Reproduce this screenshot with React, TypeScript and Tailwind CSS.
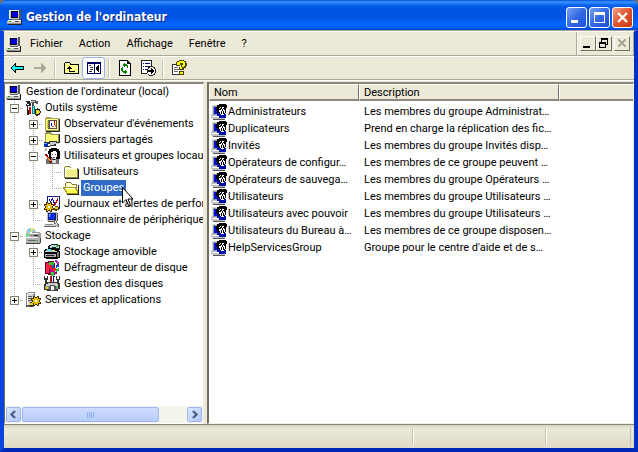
import type { ReactNode } from "react";

type IconProps = { size?: string; children: ReactNode };

function Icon({ children, size = "size-4" }: IconProps) {
  return (
    <svg viewBox="0 0 16 16" className={`${size} block shrink-0`} shapeRendering="crispEdges" aria-hidden="true">
      {children}
    </svg>
  );
}

const ComputerIcon = () => (
  <Icon>
    <path d="M2 1h10v9H2z" fill="#c4c4c4" />
    <path d="M2 1h10v1H2zM2 2h1v8H2z" fill="#f0f0f0" />
    <path d="M12 1h2v9h-2z" fill="#555" />
    <path d="M4 2h7v7H4z" fill="#000" />
    <path d="M5 3h6v5H5z" fill="#0000d8" />
    <path d="M4 10h8v1H4z" fill="#666" />
    <path d="M1 11h13v3H0v-2h1z" fill="#d0d0c8" />
    <path d="M1 11h12v1H1z" fill="#fff" />
    <path d="M0 14h14v1H0z" fill="#909090" />
    <path d="M1 15h14v1H1zM14 10h1v5h-1z" fill="#222" />
    <path d="M8 12h4v1H8z" fill="#555" />
    <path d="M2 12h2v1H2z" fill="#00a000" />
  </Icon>
);

const ToolsIcon = () => (
  <Icon>
    <path d="M1 1h4v2h1v3H4v9H2V6H1z" fill="#222" />
    <path d="M1 2h1v2H1zM2 4h2v1H2zM3 6h1v4H3z" fill="#fff" />
    <path d="M6 0h5v1h2v3h-2V3H9v4H7V3H6z" fill="#555" />
    <path d="M6 1h4v1H6z" fill="#ddd" />
    <path d="M4 7h2v7H4z" fill="#d00000" />
    <path d="M7 6h3v8H7z" fill="#008080" />
    <path d="M8 6h1v7H8z" fill="#60e0d0" />
    <path d="M10 9h2V8h1v1h2v2h1v2h-1v2h-2v1h-2v-1h-1z" fill="#222" />
    <path d="M11 10h3v1h1v2h-1v1h-3z" fill="#e8c800" />
    <path d="M12 11h1v2h-1z" fill="#fff" />
  </Icon>
);

const EventIcon = () => (
  <Icon>
    <path d="M1 2h1V1h5v1h8v13H1z" fill="#a8a060" />
    <path d="M2 3h12v11H2z" fill="#ffff80" />
    <path d="M15 3h1v13H2v-1h13z" fill="#222" />
    <path d="M4 4h9v9H4z" fill="#555" />
    <path d="M6 5h6v7H6z" fill="#fff" />
    <path d="M7 7h1v3H7z" fill="#0000ff" />
    <path d="M10 5h1v4h-1z" fill="#e00000" />
    <path d="M8 10h2v1H8zM11 9h1v2h-1z" fill="#e07050" />
    <path d="M3 5h2v1H3zM3 7h2v1H3zM3 9h2v1H3zM3 11h2v1H3z" fill="#c0a000" />
  </Icon>
);

const FolderIcon = () => (
  <Icon>
    <path d="M1 3h1V2h5v1h1v1h7v10H1z" fill="#808060" />
    <path d="M2 3h5v1H2zM2 5h12v8H2z" fill="#ffff90" />
    <path d="M2 4h12v1H2zM2 5h1v8H2z" fill="#fff" />
    <path d="M4 6h1v1H4zM6 6h1v1H6zM8 6h1v1H8zM10 6h1v1h-1zM12 6h1v1h-1zM5 7h1v1H5zM7 7h1v1H7zM9 7h1v1H9zM11 7h1v1h-1zM4 8h1v1H4zM6 8h1v1H6zM8 8h1v1H8zM10 8h1v1h-1zM12 8h1v1h-1zM5 9h1v1H5zM7 9h1v1H7zM9 9h1v1H9zM11 9h1v1h-1zM4 10h1v1H4zM6 10h1v1H6zM8 10h1v1H8zM10 10h1v1h-1zM12 10h1v1h-1zM5 11h1v1H5zM7 11h1v1H7zM9 11h1v1H9zM11 11h1v1h-1z" fill="#e8d880" />
    <path d="M15 5h1v10H2v-1h13z" fill="#222" />
  </Icon>
);

const OpenFolderIcon = () => (
  <Icon>
    <path d="M2 3h1V2h5v1h1v1h5v4H2z" fill="#808040" />
    <path d="M3 3h5v1h1v1h4v3H3z" fill="#ffffc0" />
    <path d="M0 7h13v1h1v2h1v4H3v-2H2v-2H1V9H0z" fill="#a89820" />
    <path d="M2 8h10v1h1v2h1v2H4v-2H3V9H2z" fill="#ffff50" />
    <path d="M2 8h10v1H2z" fill="#fff" />
    <path d="M15 5h1v10H4v-1h11z" fill="#222" />
  </Icon>
);

const SharedIcon = () => (
  <Icon>
    <path d="M1 1h1V0h5v1h1v1h7v10H1z" fill="#909050" />
    <path d="M2 2h5v1h7v7H2z" fill="#ffff78" />
    <path d="M15 2h1v9h-1z" fill="#222" />
    <path d="M0 10h5V9h8v1h2v2h-3v2H6v1H0z" fill="#333" />
    <path d="M6 10h6v1h3v1h-5v1H6z" fill="#c8c8c8" />
    <path d="M0 11h4v4H0z" fill="#0030b0" />
    <path d="M0 11h3v1H0z" fill="#60a0ff" />
    <path d="M4 12h2v2H4z" fill="#fff" />
  </Icon>
);

const LocalUsersIcon = () => (
  <Icon>
    <path d="M5 1h2V0h6v1h2v2h1v8h-2v2H8v-2H4V9h1V6H4V3h1z" fill="#000" />
    <path d="M7 4h2V3h3v1h1v5h-1v2H8V9H7z" fill="#fff" />
    <path d="M8 6h1v1H8zM11 6h1v1h-1zM9 9h2v1H9z" fill="#903030" />
    <path d="M2 11h5v-1h2v2h2v-1h4v5H2z" fill="#707070" />
    <path d="M8 12h4v3H8z" fill="#ddd" />
    <path d="M1 6h2v1h1v2h1v1h1v1h1v2h1v2H6v-1H5v-2H4v-1H3V9H2V8H1z" fill="#800000" />
    <path d="M1 7h1v1h1v1h1v2h1v1h1v1H5v-1H4v-1H3V9H2V8H1z" fill="#ff4020" />
    <path d="M4 10h1v1h1v1h1v1H6v-1H5v-1H4z" fill="#ffe000" />
    <path d="M1 0h2v2H1zM0 2h3v1H0z" fill="#bbb" />
  </Icon>
);

const UserGroupIcon = () => (
  <Icon>
    <path d="M1 1h7v10H1z" fill="#999" />
    <path d="M1 1h5v1H2v8H1z" fill="#d8d8d8" />
    <path d="M3 3h6v7H3z" fill="#0010d8" />
    <path d="M0 11h8v1h6v3H1v-1H0z" fill="#c0c0c0" />
    <path d="M1 12h10v1H1z" fill="#fff" />
    <path d="M2 15h12v1H2z" fill="#555" />
    <path d="M5 3h1V1h2V0h7v1h1v3h-1v5h-1v2H9v-1H7V9H6V7H5z" fill="#000" />
    <path d="M8 4h1v1H8zM9 3h1v1H9zM11 3h2v1h-1v1h-1zM8 6h2V5h1v2h-1v3H9V8H8zM12 5h1v1h1v3h-1V7h-1zM11 7h1v3h-1z" fill="#fff" />
    <path d="M6 9h2v1h2v1h3v-1h2v4H8v-2H6z" fill="#0010a8" />
    <path d="M10 10h3v1h-3z" fill="#fff" />
  </Icon>
);

const PerfIcon = () => (
  <Icon>
    <path d="M3 0h12v14H3z" fill="#fff" />
    <path d="M3 0h13v1H3zM15 1h1v12h-1zM3 1h1v5H3z" fill="#102080" />
    <path d="M5 3h1v2H5zM6 5h1v1H6zM7 3h1v2H7zM8 2h1v2H8zM9 4h1v3H9zM10 6h1v2h-1z" fill="#0000e0" />
    <path d="M13 2h1v3h-1zM12 4h1v3h-1zM11 6h1v3h-1zM10 8h1v2h-1z" fill="#e00000" />
    <path d="M2 6h2v1h2V6h2v2h2v2H9v2h1v2H8v2H6v-1H4v1H2v-2H0v-2h1v-2H0V8h2z" fill="#403000" />
    <path d="M3 7h1v1h2V7h1v2h2v1H8v2h1v1H7v2H6v-1H4v1H3v-2H1v-1h1v-2H1V9h2z" fill="#e8c000" />
    <path d="M4 10h2v2H4z" fill="#fff" />
    <path d="M11 10h3v1h1v3h-2v1h-2v-1h-1v-2h1z" fill="#504000" />
    <path d="M11 11h3v2h-3z" fill="#f0d000" />
  </Icon>
);

const DeviceIcon = () => (
  <Icon>
    <path d="M3 0h10v9H3z" fill="#b8b8b8" />
    <path d="M4 1h8v7H4z" fill="#102080" />
    <path d="M5 2h6v5H5z" fill="#0030e8" />
    <path d="M5 2h2v1H5zM5 3h1v2H5z" fill="#70b0ff" />
    <path d="M13 1h1v8h-1zM4 9h9v1H4z" fill="#555" />
    <path d="M1 11h11v3H0v-2h1z" fill="#d0d0d0" />
    <path d="M1 11h11v1H1z" fill="#fff" />
    <path d="M0 14h12v1H0z" fill="#666" />
    <path d="M2 12h7v1H2z" fill="#888" />
    <path d="M10 8h2v1h1v2h1v1h1v3h-2v-1h-1v-2h-2z" fill="#666" />
    <path d="M11 9h1v2h1v2h1v1h-1v-1h-1v-2h-1z" fill="#fff" />
  </Icon>
);

const StorageIcon = () => (
  <Icon>
    <circle cx="6" cy="5" r="5" fill="#b0c8c8" />
    <path d="M6 5L2 1h3z" fill="#40e0f0" />
    <path d="M6 5V0h3z" fill="#f0f060" />
    <path d="M6 5L1 6v3z" fill="#60e060" />
    <path d="M5 4h2v2H5z" fill="#fff" />
    <path d="M7 4h8v1h1v6H5V6h2z" fill="#999" />
    <path d="M7 5h7v1H7z" fill="#eee" />
    <path d="M9 7h4v1H9z" fill="#222" />
    <path d="M1 9h12v1h2v5H1z" fill="#b0b0b0" />
    <path d="M1 9h12v1H1z" fill="#fff" />
    <path d="M1 15h14v1H1zM15 10h1v5h-1z" fill="#444" />
    <path d="M3 12h8v1H3z" fill="#666" />
    <path d="M12 12h1v1h-1z" fill="#00c000" />
  </Icon>
);

const RemovableIcon = () => (
  <Icon>
    <path d="M5 1h2V0h7v1h2v5H4V2h1z" fill="#222" />
    <path d="M7 1h6v1h2v2h-3V3H8v1H6V2h1z" fill="#b8d8e0" />
    <path d="M12 1h2v2h-2z" fill="#30d030" />
    <path d="M0 6h1V5h3V4h8v1h3v2h1v7h-2v1H2v-1H0z" fill="#000" />
    <path d="M2 6h9v1h2v1H1V7h1z" fill="#c8c8c8" />
    <path d="M3 5h4v2H3z" fill="#50e0f0" />
    <path d="M8 6h3v1H8z" fill="#f0f060" />
    <path d="M1 10h11v3H1z" fill="#a8a8a8" />
    <path d="M2 11h8v1H2z" fill="#222" />
    <path d="M13 8h2v5h-2z" fill="#777" />
  </Icon>
);

const DefragIcon = () => (
  <Icon>
    <path d="M1 2h3V1h6v2h1v12H4v-1H1z" fill="#700020" />
    <path d="M2 3h3v10H2z" fill="#ff2050" />
    <path d="M5 2h5v3H5z" fill="#30c030" />
    <path d="M5 5h3v4H5z" fill="#f01818" />
    <path d="M6 9h5v5H6z" fill="#c80090" />
    <path d="M8 5h2v3H8z" fill="#1050e0" />
    <path d="M9 8h3v3H9z" fill="#ff3010" />
    <path d="M11 0h2v1h1v1h1v2h-2V3h-1V2h-1z" fill="#c020c0" />
    <path d="M12 5h1V4h2v3h-2v1h-1z" fill="#2040d0" />
    <path d="M12 9h2V8h1v3h-2v1h-1z" fill="#20b040" />
    <path d="M7 12h3v4H7z" fill="#30d040" />
    <path d="M11 12h2v2h-2z" fill="#801060" />
  </Icon>
);

const DisksIcon = () => (
  <Icon>
    <path d="M0 0h1v2h2V0h1v4H3v4H1V4H0zM12 0h1v3h2V0h1v4h-1v4h-2V4h-1z" fill="#333" />
    <path d="M6 0h2v7H6z" fill="#c01010" />
    <path d="M9 0h2v1h-1v6H9z" fill="#101080" />
    <path d="M1 7h2V6h11v1h2v6h-2v2H3v-1H0V8h1z" fill="#333" />
    <path d="M2 8h2V7h9v1h1v2H2z" fill="#ccc" />
    <path d="M1 10h13v3H1z" fill="#999" />
    <path d="M6 9h5v1h1v4h-1v1H6v-1H5v-4h1z" fill="#555" />
    <path d="M7 10h3v4H7z" fill="#eee" />
    <path d="M12 11h1v1h-1z" fill="#00e000" />
    <path d="M2 11h2v2H2z" fill="#e8d800" />
  </Icon>
);

const ServicesIcon = () => (
  <Icon>
    <path d="M1 1h2V0h7v13H1z" fill="#888" />
    <path d="M2 2h6v11H2z" fill="#d4d4d4" />
    <path d="M2 2h1v11H2zM3 1h6v1H3z" fill="#fff" />
    <path d="M3 4h4v1H3zM3 6h4v1H3zM3 8h4v1H3z" fill="#555" />
    <path d="M1 13h8v2H1z" fill="#555" />
    <path d="M8 4h2v1h2V4h2v2h2v2h-1v2h1v2h-2v2h-2v-1h-2v1H8v-2H6v-2h1V8H6V6h2z" fill="#403000" />
    <path d="M9 5h1v1h2V5h1v2h2v1h-1v2h1v1h-2v2h-1v-1h-2v1H9v-2H7v-1h1V8H7V7h2z" fill="#e8c000" />
    <path d="M10 8h2v2h-2z" fill="#fff" />
    <path d="M5 10h2v1h2v3H7v1H5z" fill="#333" />
    <path d="M5 11h3v2H5z" fill="#f0d000" />
  </Icon>
);

const BackIcon = () => (
  <Icon>
    <path d="M6 3h1v3h8v4H7v3H6v-1H5v-1H4v-1H3V9H2V7h1V6h1V5h1V4h1z" fill="#000" />
    <path d="M6 5v2h8v2H6v2H5v-1H4V9H3V7h1V6h1V5z" fill="#00ffff" />
  </Icon>
);

const ForwardIcon = () => (
  <Icon>
    <path d="M9 3h1v1h1v1h1v1h1v1h1v2h-1v1h-1v1h-1v1h-1v1H9v-4H2V7h7z" fill="#aca899" />
  </Icon>
);

const UpIcon = () => (
  <Icon>
    <path d="M1 3h1V2h5v1h1v1h8v10H1z" fill="#000" />
    <path d="M2 3h5v2h8v8H2z" fill="#ffff90" />
    <path d="M6 6h1v1h1v1h1v1H7v2h5v1H6V9H4V8h1V7h1z" fill="#000" />
  </Icon>
);

const PaneIcon = () => (
  <Icon>
    <path d="M1 2h14v12H1z" fill="#000060" />
    <path d="M2 4h6v9H2zM9 4h5v9H9z" fill="#fff" />
    <path d="M3 5h2v1H3zM4 7h3v1H4zM4 9h3v1H4zM3 11h3v1H3z" fill="#333" />
    <path d="M12 5h1v7h-1v-1h-1v-1h-1V7h1V6h1z" fill="#000" />
  </Icon>
);

const RefreshIcon = () => (
  <Icon>
    <path d="M2 0h9v1h1v1h1v1h1v13H2z" fill="#000" />
    <path d="M3 1h7v3h3v11H3z" fill="#fff" />
    <path d="M7 3h1v1h2v1h1v3h-1V6H8v1H7V6H6V4h1zM5 7h1v4h2v-1h1v1h1v2H9v1H8v-1H6v-1H5v-1H4V8h1z" fill="#008000" />
  </Icon>
);

const ExportIcon = () => (
  <Icon>
    <path d="M1 0h11v6h-1V1H2v12h5v1H1z" fill="#222" />
    <path d="M2 1h9v5H8v7H2z" fill="#fff" />
    <path d="M3 3h1v1H3zM5 3h5v1H5zM3 6h1v1H3zM5 6h4v1H5zM3 9h1v1H3zM5 9h2v1H5z" fill="#000080" />
    <path d="M9 6h4v1h2v2h1v4h-1v2h-2v1H9v-1H8v-2H7V9h1V7h1z" fill="#222" />
    <path d="M9 8h1V7h3v1h1v1h1v4h-1v1h-1v1H9v-1H8V9h1z" fill="#fff" />
    <path d="M11 8h1v1h1v1h1v2h-1v1h-1v1h-1v-2H8v-2h3z" fill="#000" />
  </Icon>
);

const HelpIcon = () => (
  <Icon>
    <path d="M1 4h7v11H1z" fill="#333" />
    <path d="M2 5h8v9H2z" fill="#fff" />
    <path d="M3 7h4v1H3zM3 9h5v1H3zM3 11h4v1H3z" fill="#666" />
    <path d="M2 14h9v1H2z" fill="#333" />
    <path d="M5 2h1V1h2V0h5v1h2v2h1v3h-1v2h-2v2H8V7h2V5H9v1H5z" fill="#444400" />
    <path d="M6 2h2V1h5v1h1v4h-1v1h-2v2H9V7h2V5h1V3H9v2H6z" fill="#ffff00" />
    <path d="M8 11h5v4H8z" fill="#444400" />
    <path d="M9 12h3v2H9z" fill="#ffff00" />
  </Icon>
);

type Guide = "line" | "tee" | "end";

type TreeNode = {
  label: string;
  icon: ReactNode;
  guides: Guide[];
  expander?: "plus" | "minus";
  selected?: boolean;
};

const tree: TreeNode[] = [
  { label: "Gestion de l'ordinateur (local)", icon: <ComputerIcon />, guides: [] },
  { label: "Outils système", icon: <ToolsIcon />, guides: ["tee"], expander: "minus" },
  { label: "Observateur d'événements", icon: <EventIcon />, guides: ["line", "tee"], expander: "plus" },
  { label: "Dossiers partagés", icon: <SharedIcon />, guides: ["line", "tee"], expander: "plus" },
  { label: "Utilisateurs et groupes locaux", icon: <LocalUsersIcon />, guides: ["line", "tee"], expander: "minus" },
  { label: "Utilisateurs", icon: <FolderIcon />, guides: ["line", "line", "tee"] },
  { label: "Groupes", icon: <OpenFolderIcon />, guides: ["line", "line", "end"], selected: true },
  { label: "Journaux et alertes de performance", icon: <PerfIcon />, guides: ["line", "tee"], expander: "plus" },
  { label: "Gestionnaire de périphériques", icon: <DeviceIcon />, guides: ["line", "end"] },
  { label: "Stockage", icon: <StorageIcon />, guides: ["tee"], expander: "minus" },
  { label: "Stockage amovible", icon: <RemovableIcon />, guides: ["line", "tee"], expander: "plus" },
  { label: "Défragmenteur de disque", icon: <DefragIcon />, guides: ["line", "tee"] },
  { label: "Gestion des disques", icon: <DisksIcon />, guides: ["line", "end"] },
  { label: "Services et applications", icon: <ServicesIcon />, guides: ["end"], expander: "plus" },
];

const groups = [
  ["Administrateurs", "Les membres du groupe Administrat…"],
  ["Duplicateurs", "Prend en charge la réplication des fic…"],
  ["Invités", "Les membres du groupe Invités disp…"],
  ["Opérateurs de configur…", "Les membres de ce groupe peuvent …"],
  ["Opérateurs de sauvega…", "Les membres du groupe Opérateurs …"],
  ["Utilisateurs", "Les membres du groupe Utilisateurs …"],
  ["Utilisateurs avec pouvoir", "Les membres du groupe Utilisateurs …"],
  ["Utilisateurs du Bureau à…", "Les membres de ce groupe disposen…"],
  ["HelpServicesGroup", "Groupe pour le centre d'aide et de s…"],
];

function GuideCell({ kind, expander }: { kind: Guide; expander?: "plus" | "minus" }) {
  const drawing = (
    <svg viewBox="0 0 19 16" className="block h-4 w-[19px]" shapeRendering="crispEdges" aria-hidden="true">
      <path d={kind === "end" ? "M9.5 0V8" : "M9.5 0V16"} stroke="#aca899" strokeDasharray="1 1" />
      {kind !== "line" && <path d="M9 8.5H19" stroke="#aca899" strokeDasharray="1 1" />}
      {expander && (
        <>
          <path d="M5.5 4.5h8v8h-8z" fill="#fff" stroke="#85846f" />
          <path d={expander === "plus" ? "M7 8.5h5M9.5 6v5" : "M7 8.5h5"} stroke="#000" />
        </>
      )}
    </svg>
  );
  if (!expander) return <span className="shrink-0">{drawing}</span>;
  return (
    <button type="button" className="shrink-0" aria-label={expander === "plus" ? "Développer" : "Réduire"}>
      {drawing}
    </button>
  );
}

function ToolButton({ label, pressed, children }: { label: string; pressed?: boolean; children: ReactNode }) {
  return (
    <button
      type="button"
      aria-label={label}
      className={`flex h-[22px] w-[23px] items-center justify-center ${
        pressed ? "rounded-[3px] border border-[#98b5e2] bg-white" : ""
      }`}
    >
      {children}
    </button>
  );
}

const ToolSeparator = () => <div className="mx-[3px] h-[19px] w-0.5 border-r border-r-white bg-[#c5c2b2]" />;

function CaptionButton({ label, close, children }: { label: string; close?: boolean; children: ReactNode }) {
  return (
    <button
      type="button"
      aria-label={label}
      className={`size-[21px] rounded-[3px] border border-white ${
        close
          ? "bg-linear-to-br from-[#f0a080] via-[#e0512c] to-[#c03c10]"
          : "bg-linear-to-br from-[#7ba2f0] via-[#3468e4] to-[#1c50d8]"
      }`}
    >
      <svg viewBox="0 0 19 19" className="block size-[19px]" aria-hidden="true">
        {children}
      </svg>
    </button>
  );
}

function ChildButton({ label, children }: { label: string; children: ReactNode }) {
  return (
    <button
      type="button"
      aria-label={label}
      className="h-[15px] w-4 border border-t-white border-r-[#716f64] border-b-[#716f64] border-l-white bg-[#ece9d8]"
    >
      <svg viewBox="0 0 14 13" className="block h-[13px] w-[14px]" shapeRendering="crispEdges" aria-hidden="true">
        {children}
      </svg>
    </button>
  );
}

function ScrollButton({ label, path }: { label: string; path: string }) {
  return (
    <button
      type="button"
      aria-label={label}
      className="m-px h-[15px] w-[15px] shrink-0 rounded-xs border border-[#9db6f2] bg-linear-to-br from-[#dce6ff] to-[#b4c8f8]"
    >
      <svg viewBox="0 0 13 13" className="block size-[13px]" aria-hidden="true">
        <path d={path} fill="none" stroke="#4d6185" strokeWidth="2.4" />
      </svg>
    </button>
  );
}

export default function App() {
  return (
    <div className="h-screen bg-[#6f6f6f] font-[Roboto,'Liberation_Sans',sans-serif] text-[11px] leading-4 text-black">
      <div className="flex h-full flex-col overflow-hidden rounded-t-[7px] bg-[#0040dc]">
        <header className="flex h-[30px] shrink-0 items-center bg-[linear-gradient(180deg,#0050d8_0px,#3a93ff_2px,#0a66f0_5px,#0054e3_8px,#0055e5_18px,#0566ff_24px,#0263fc_27px,#0041c8_30px)] pt-1 pr-[5px] pl-[7px]">
          <ComputerIcon />
          <h1 className="flex-1 truncate pl-[3px] font-['DejaVu_Sans_Condensed','DejaVu_Sans',sans-serif] text-[12px] font-bold text-white [text-shadow:1px_1px_#0a1e82]">
            Gestion de l'ordinateur
          </h1>
          <div className="flex gap-0.5">
            <CaptionButton label="Réduire">
              <path d="M4 12h7v3H4z" fill="#fff" />
            </CaptionButton>
            <CaptionButton label="Agrandir">
              <path d="M4 4h11v11H4zM5 7v7h9V7z" fill="#fff" fillRule="evenodd" />
            </CaptionButton>
            <CaptionButton label="Fermer" close>
              <path d="M5 5l9 9M14 5l-9 9" stroke="#fff" strokeWidth="2.4" />
            </CaptionButton>
          </div>
        </header>

        <div className="flex min-h-0 flex-1 flex-col border-x-4 border-t border-b-4 border-t-[#aca899] border-r-[#0030c0] border-b-[#0028b8] border-l-[#0845dc] bg-[#ece9d8]">
          <div className="flex h-[25px] shrink-0 border-t border-b border-t-white border-b-[#aca899]">
            <div className="flex flex-1 items-center border-r border-r-[#aca899] pl-0.5">
              <ComputerIcon />
              <nav className="flex" aria-label="Menu">
                {["Fichier", "Action", "Affichage", "Fenêtre", "?"].map((item) => (
                  <button key={item} type="button" className="px-2">
                    {item}
                  </button>
                ))}
              </nav>
            </div>
            <div className="flex items-center border-x border-r-[#aca899] border-l-white pr-[3px] pl-0.5">
              <ChildButton label="Réduire la fenêtre fille">
                <path d="M2 9h7v2H2z" />
              </ChildButton>
              <ChildButton label="Restaurer la fenêtre fille">
                <path d="M4 1h7v7H9V7h1V3H5v2H4zM2 5h7v6H2zM3 7v3h5V7z" fillRule="evenodd" />
              </ChildButton>
              <span className="w-0.5" />
              <ChildButton label="Fermer la fenêtre fille">
                <path d="M3 2h2v1h1v1h2V3h1V2h2v2h-1v1H9v2h1v1h1v2H9V9H8V8H6v1H5v1H3V8h1V7h1V5H4V4H3z" fill="#aca899" />
              </ChildButton>
            </div>
          </div>

          <div className="flex h-6 shrink-0 items-center border-y border-t-white border-b-[#aca899] pl-px" role="toolbar">
            <ToolButton label="Précédent"><BackIcon /></ToolButton>
            <ToolButton label="Suivant"><ForwardIcon /></ToolButton>
            <ToolSeparator />
            <ToolButton label="Dossier parent"><UpIcon /></ToolButton>
            <ToolButton label="Afficher l'arborescence" pressed><PaneIcon /></ToolButton>
            <ToolSeparator />
            <ToolButton label="Actualiser"><RefreshIcon /></ToolButton>
            <ToolButton label="Exporter la liste"><ExportIcon /></ToolButton>
            <ToolSeparator />
            <ToolButton label="Aide"><HelpIcon /></ToolButton>
          </div>

          <main className="flex min-h-0 flex-1 gap-[3px] border-t border-t-white pt-px">
            <section className="flex w-[200px] shrink-0 flex-col overflow-hidden border-t-2 border-r border-b border-l border-t-[#8b887a] border-r-[#f1efe2] border-b-white border-l-[#716f64] bg-white">
              <ul className="flex-1">
                {tree.map((node) => (
                  <li key={node.label} className="flex h-4 items-center">
                    {node.guides.map((kind, i) => (
                      <GuideCell key={i} kind={kind} expander={i === node.guides.length - 1 ? node.expander : undefined} />
                    ))}
                    <span className="flex w-[18px] shrink-0 justify-center">{node.icon}</span>
                    <button
                      type="button"
                      className={`relative ml-px h-4 px-0.5 whitespace-nowrap ${node.selected ? "bg-[#316ac5] text-white" : ""}`}
                    >
                      {node.label}
                      {node.selected && (
                        <svg viewBox="0 0 12 19" className="absolute top-[7px] -right-2 z-10 h-[19px] w-3" aria-hidden="true">
                          <path d="M.5 .5v15.500l3.500-3.500 2.500 6h2l-2.500-6.500h5z" fill="#fff" stroke="#000" />
                        </svg>
                      )}
                    </button>
                  </li>
                ))}
              </ul>
              <div className="flex h-[17px] shrink-0 bg-[#f4f3ec]">
                <ScrollButton label="Défiler à gauche" path="M8 3L4.500 6.500 8 10" />
                <div className="flex-1 py-px">
                  <div className="flex h-[15px] w-5/6 items-center justify-center gap-px rounded-xs border border-[#9db6f2] bg-linear-to-b from-[#d0dcff] to-[#b8ccfa]">
                    {[0, 1, 2, 3].map((n) => (
                      <span key={n} className="h-1.5 w-px bg-[#8cb0f8]" />
                    ))}
                  </div>
                </div>
                <ScrollButton label="Défiler à droite" path="M5 3l3.500 3.500L5 10" />
              </div>
            </section>

            <section className="min-w-0 flex-1 overflow-hidden border-t-2 border-r border-b border-l-2 border-t-[#8b887a] border-r-[#f1efe2] border-b-[#f1efe2] border-l-[#716f64] bg-white">
              <table className="w-full table-fixed border-separate border-spacing-0">
                <colgroup>
                  <col className="w-[150px]" />
                  <col className="w-[200px]" />
                  <col />
                </colgroup>
                <thead>
                  <tr>
                    {["Nom", "Description", ""].map((title) => (
                      <th
                        key={title}
                        scope="col"
                        className="h-[17px] border-t border-r border-b-2 border-l border-t-white border-r-[#716f64] border-b-[#8b887a] border-l-white bg-[#ece9d8] p-0 pl-1 text-left font-normal last:border-r-0"
                      >
                        <span className="block h-3.5 leading-4">{title}</span>
                      </th>
                    ))}
                  </tr>
                </thead>
                <tbody className="before:block before:h-0.5">
                  {groups.map(([name, description]) => (
                    <tr key={name}>
                      <td className="p-0">
                        <span className="flex h-[17px] items-center gap-px pl-0.5 whitespace-nowrap">
                          <UserGroupIcon />
                          {name}
                        </span>
                      </td>
                      <td className="overflow-hidden p-0 pl-[5px] whitespace-nowrap">{description}</td>
                      <td className="p-0" />
                    </tr>
                  ))}
                </tbody>
              </table>
            </section>
          </main>

          <footer className="flex h-6 shrink-0 border-t border-t-[#8b887a] bg-linear-to-b from-[#d8d5c4] via-[#ece9d8] via-20% to-[#dedac6] py-[3px] pr-[3px]">
            <div className="flex-1 border-r border-r-[#c5c2b2]" />
            <div className="w-[133px] border-x border-r-[#c5c2b2] border-l-white" />
            <div className="w-[85px] border-x border-r-[#c5c2b2] border-l-white" />
          </footer>
        </div>
      </div>
    </div>
  );
}
